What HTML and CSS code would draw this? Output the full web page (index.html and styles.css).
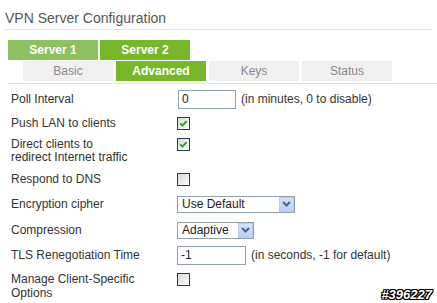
FILE: index.html
```html
<!DOCTYPE html>
<html>
<head>
<meta charset="utf-8">
<link rel="stylesheet" href="styles.css">
</head>
<body>
<div class="page">
  <h1 class="title">VPN Server Configuration</h1>
  <div class="tabs tabs-top">
    <span class="tab tab-dim">Server 1</span>
    <span class="tab tab-on">Server 2</span>
  </div>
  <div class="tabs tabs-sub">
    <span class="tab tab-off">Basic</span>
    <span class="tab tab-on">Advanced</span>
    <span class="tab tab-off">Keys</span>
    <span class="tab tab-off">Status</span>
  </div>
  <div class="fields">
    <div class="row">
      <div class="label">Poll Interval</div>
      <div class="ctrl"><input class="txt txt-poll" value="0"><span class="hint">(in minutes, 0 to disable)</span></div>
    </div>
    <div class="row">
      <div class="label">Push LAN to clients</div>
      <div class="ctrl"><span class="cb"><svg width="11" height="11" viewBox="0 0 11 11"><path d="M2.3 5.4 L4.4 7.6 L8.7 3.1" fill="none" stroke="#2f9e2f" stroke-width="2"/></svg></span></div>
    </div>
    <div class="row row-two">
      <div class="label">Direct clients to<br>redirect Internet traffic</div>
      <div class="ctrl"><span class="cb"><svg width="11" height="11" viewBox="0 0 11 11"><path d="M2.3 5.4 L4.4 7.6 L8.7 3.1" fill="none" stroke="#2f9e2f" stroke-width="2"/></svg></span></div>
    </div>
    <div class="row">
      <div class="label">Respond to DNS</div>
      <div class="ctrl"><span class="cb"></span></div>
    </div>
    <div class="row row-sel">
      <div class="label">Encryption cipher</div>
      <div class="ctrl"><span class="sel sel-cipher"><span class="sel-val">Use Default</span><span class="sel-btn"><svg width="9" height="6" viewBox="0 0 9 6"><path d="M1 1 L4.5 4.5 L8 1" fill="none" stroke="#4d6185" stroke-width="2"/></svg></span></span></div>
    </div>
    <div class="row row-sel">
      <div class="label">Compression</div>
      <div class="ctrl"><span class="sel sel-comp"><span class="sel-val">Adaptive</span><span class="sel-btn"><svg width="9" height="6" viewBox="0 0 9 6"><path d="M1 1 L4.5 4.5 L8 1" fill="none" stroke="#4d6185" stroke-width="2"/></svg></span></span></div>
    </div>
    <div class="row">
      <div class="label">TLS Renegotiation Time</div>
      <div class="ctrl"><input class="txt txt-tls" value="-1"><span class="hint">(in seconds, -1 for default)</span></div>
    </div>
    <div class="row row-last">
      <div class="label">Manage Client-Specific<br>Options</div>
      <div class="ctrl"><span class="cb"></span></div>
    </div>
  </div>
  <div class="stamp">#396227</div>
</div>
</body>
</html>
```
FILE: styles.css
```css
html, body {
  margin: 0;
  padding: 0;
  background: #fff;
}
.page {
  position: relative;
  width: 437px;
  height: 303px;
  overflow: hidden;
  font-family: "Liberation Sans", Arial, sans-serif;
  font-size: 12px;
  color: #333;
}
.title {
  margin: 0 5px;
  padding: 10px 0 3px;
  font-size: 14px;
  line-height: 16px;
  font-weight: normal;
  color: #555;
  border-bottom: 1px solid #e6e6e6;
}
.tabs {
  display: flex;
  margin-left: 8px;
}
.tabs-top {
  margin-top: 10px;
  gap: 2px;
}
.tabs-sub {
  margin-top: 1px;
  padding-left: 15px;
  padding-bottom: 2px;
  gap: 3px;
  border-bottom: 1px solid #e2e2e2;
}
.tab {
  width: 90px;
  height: 20px;
  display: flex;
  align-items: center;
  justify-content: center;
  font-size: 12px;
}
.tab-dim {
  background: #8dc060;
  color: #fff;
  font-weight: bold;
}
.tab-on {
  background: #76b82a;
  color: #fff;
  font-weight: bold;
}
.tab-off {
  background: #f0f0f0;
  color: #8a8a8a;
}
.fields {
  margin-top: 3px;
}
.row {
  display: flex;
  align-items: flex-start;
  padding: 5px 0;
}
.row-two {
  padding: 3px 0;
}
.row-two .label {
  line-height: 13px;
}
.row-two .ctrl {
  height: 13px;
}
.row-sel {
  padding: 6px 0;
}
.label {
  width: 177px;
  flex: none;
  box-sizing: border-box;
  padding-left: 11px;
  line-height: 14px;
}
.ctrl {
  height: 14px;
  display: flex;
  align-items: center;
  gap: 5px;
}
.txt {
  box-sizing: border-box;
  height: 19px;
  margin: 0;
  padding: 0 3px;
  border: 1px solid #8e9fae;
  font-family: "Liberation Sans", Arial, sans-serif;
  font-size: 12px;
  color: #222;
  background: #fff;
  outline: none;
}
.txt-poll {
  width: 58px;
  margin-left: 1px;
}
.txt-tls {
  width: 69px;
}
.hint {
  color: #333;
  white-space: nowrap;
}
.cb {
  box-sizing: border-box;
  width: 13px;
  height: 13px;
  border: 1px solid #1f3f5f;
  background: linear-gradient(135deg, #d8d8d2 0%, #f4f4f2 70%, #fff 100%);
  display: flex;
  align-items: center;
  justify-content: center;
}
.sel {
  box-sizing: border-box;
  height: 17px;
  border: 1px solid #8e9fae;
  display: flex;
  align-items: center;
  justify-content: space-between;
  padding-left: 4px;
  background: #fff;
  color: #222;
}
.sel-cipher {
  width: 118px;
}
.sel-comp {
  width: 77px;
}
.sel-btn {
  box-sizing: border-box;
  width: 15px;
  height: 15px;
  border: 1px solid #b9cbf3;
  background: linear-gradient(180deg, #d6e2fb 0%, #bccef5 100%);
  display: flex;
  align-items: center;
  justify-content: center;
}
.stamp {
  position: absolute;
  right: 5px;
  bottom: 2px;
  font-size: 13px;
  line-height: 13px;
  font-weight: bold;
  font-style: italic;
  color: #fff;
  text-shadow: 1px 0 0 #000, -1px 0 0 #000, 0 1px 0 #000, 0 -1px 0 #000, 1px 1px 0 #000, -1px -1px 0 #000, 1px -1px 0 #000, -1px 1px 0 #000;
}
```
